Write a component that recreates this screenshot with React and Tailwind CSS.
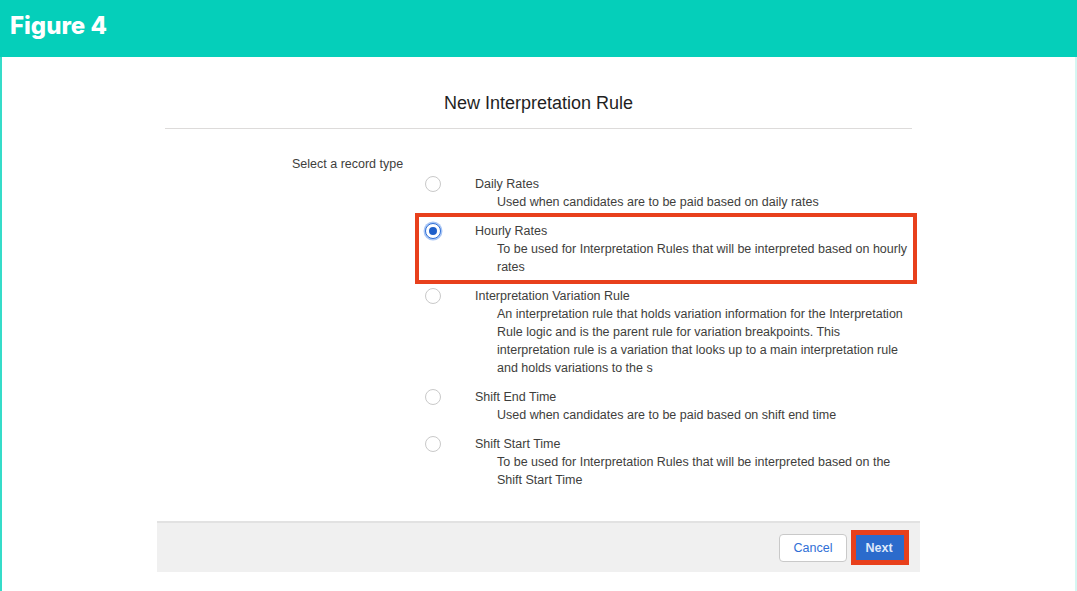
import React from 'react'

const tipos = [
  { nombre: 'Daily Rates', desc: 'Used when candidates are to be paid based on daily rates' },
  {
    nombre: 'Hourly Rates',
    desc: 'To be used for Interpretation Rules that will be interpreted based on hourly rates',
    activo: true,
  },
  {
    nombre: 'Interpretation Variation Rule',
    desc: 'An interpretation rule that holds variation information for the Interpretation Rule logic and is the parent rule for variation breakpoints. This interpretation rule is a variation that looks up to a main interpretation rule and holds variations to the s',
  },
  { nombre: 'Shift End Time', desc: 'Used when candidates are to be paid based on shift end time' },
  {
    nombre: 'Shift Start Time',
    desc: 'To be used for Interpretation Rules that will be interpreted based on the Shift Start Time',
  },
]

const Radio = ({ activo }) =>
  activo ? (
    <span className="mt-[1px] flex h-[16px] w-[16px] items-center justify-center rounded-full border border-[#2f6fd6] bg-white shadow-[0_0_0_1.5px_#a9c6f5]">
      <span className="h-[8px] w-[8px] rounded-full bg-[#1f5fc9]"></span>
    </span>
  ) : (
    <span className="mt-[1px] block h-[16px] w-[16px] rounded-full border border-[#c9c9c9] bg-white"></span>
  )

const App = () => {
  return (
    <div className="flex h-[591px] w-[1077px] flex-col overflow-hidden bg-white font-['Liberation_Sans',sans-serif] text-[12.5px] leading-[18px] text-[#3e3e3c]">
      <div className="flex h-[57px] items-start bg-[#05cfba] pl-[10px] pt-[11px]">
        <h2 className="font-['Inter',sans-serif] text-[24px] font-extrabold leading-[30px] text-white">Figure 4</h2>
      </div>

      <div className="flex flex-1 flex-col border-x-2 border-[#35dcc9] border-r-[#d5f7f3]">
        <div className="mx-auto flex w-[763px] flex-col pt-[35px]">
          <h1 className="text-center text-[18px] leading-[22px] text-[#1f1f1f]">New Interpretation Rule</h1>
          <div className="ml-[8px] mt-[14px] h-px w-[747px] bg-[#dddbda]"></div>

          <div className="flex h-[392px] pt-[26px]">
            <div className="ml-[135px] w-[133px] shrink-0">Select a record type</div>
            <div className="flex w-[484px] flex-col gap-[11px] pt-[20px]">
              {tipos.map((tipo) => (
                <div key={tipo.nombre} className="relative flex">
                  {tipo.activo && (
                    <div className="absolute bottom-[-8px] left-[-10px] right-[-8px] top-[-9px] border-4 border-[#e8401c]"></div>
                  )}
                  <div className="w-[50px] shrink-0">
                    <Radio activo={tipo.activo} />
                  </div>
                  <div className="flex-1">
                    <div>{tipo.nombre}</div>
                    <div className="pl-[22px]">{tipo.desc}</div>
                  </div>
                </div>
              ))}
            </div>
          </div>

          <div className="flex h-[51px] items-center justify-end gap-[4px] border-t-2 border-[#e2e2e2] bg-[#f0f0f0] pr-[11px]">
            <button className="h-[28px] w-[68px] rounded-[4px] border border-[#c9c9c9] bg-white pt-[1px] text-[#2f6fd6]">Cancel</button>
            <button className="h-[35px] w-[58px] border-[5px] border-[#e8401c] bg-[#2b6bcc] pr-[2px] pt-[1px] font-bold text-[#dfe9fa]">Next</button>
          </div>
        </div>
      </div>
    </div>
  )
}

export default App
